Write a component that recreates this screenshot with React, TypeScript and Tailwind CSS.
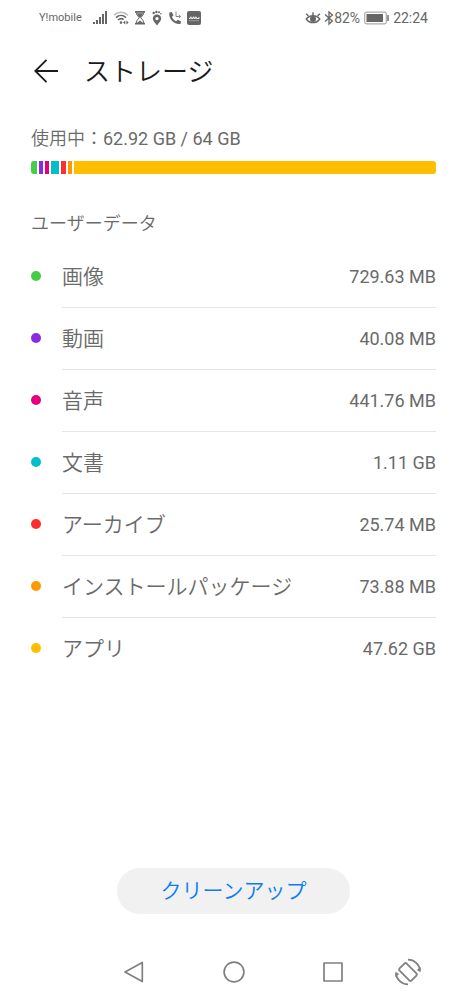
import React from "react";

const categories = [
  { name: "画像", size: "729.63 MB", color: "bg-[#47cc47]", bar: "w-[6px]" },
  { name: "動画", size: "40.08 MB", color: "bg-[#8a2be2]", bar: "w-[4px]" },
  { name: "音声", size: "441.76 MB", color: "bg-[#e3007f]", bar: "w-[4px]" },
  { name: "文書", size: "1.11 GB", color: "bg-[#00bfc9]", bar: "w-[8px]" },
  { name: "アーカイブ", size: "25.74 MB", color: "bg-[#ff2d2d]", bar: "w-[5px]" },
  { name: "インストールパッケージ", size: "73.88 MB", color: "bg-[#ff9800]", bar: "w-[4px]" },
  { name: "アプリ", size: "47.62 GB", color: "bg-[#ffbf00]", bar: "flex-1" },
];

function SignalIcon() {
  return (
    <svg width="16" height="16" viewBox="0 0 16 16" fill="#666">
      <path d="M1 12h2v2H1zM4 10h2v4H4zM7 7h2v7H7zM10 4h2v10h-2zM13 1h2v13h-2z" />
    </svg>
  );
}

function WifiIcon() {
  return (
    <svg width="16" height="16" viewBox="0 0 16 16" fill="none" stroke="#666" strokeWidth="1.6">
      <path d="M1 5.2C5 1.3 11 1.3 15 5.2" stroke="#bbb" />
      <path d="M3 7.6C6 4.8 10 4.8 13 7.6" />
      <path d="M5 10C7 8.2 9 8.2 10.6 9.6" />
      <circle cx="8" cy="12.6" r="1.3" fill="#666" stroke="none" />
      <path d="M12.3 10.4v4.2l-2.3-2.1zM13.4 10.4v4.2l2.3-2.1z" fill="#666" stroke="none" />
    </svg>
  );
}

function HourglassIcon() {
  return (
    <svg width="12" height="16" viewBox="0 0 12 16" fill="#666">
      <path d="M1 1h10v1.8H1zM1 12.7h10v1.8H1z" />
      <path d="M2.6 2.5v2L5.2 7.7 2.6 11v2M9.4 2.5v2L6.8 7.7 9.4 11v2" fill="none" stroke="#666" strokeWidth="1" />
      <path d="M2.6 3.2h6.8L6 8.2zM6 10.4 9 13H3z" />
    </svg>
  );
}

function PinIcon() {
  return (
    <svg width="12" height="16" viewBox="0 0 12 16" fill="#666">
      <path
        fillRule="evenodd"
        d="M6 4.4c2.5 0 4.2 1.8 4.2 4.1C10.2 11 7.6 13 6 15.4 4.4 13 1.8 11 1.8 8.5c0-2.3 1.7-4.1 4.2-4.1zm0 2.5a1.7 1.7 0 1 0 0 3.4 1.7 1.7 0 0 0 0-3.4z"
      />
      <circle cx="2.7" cy="3" r="1.2" />
      <circle cx="5.4" cy="2" r="1.2" />
      <circle cx="8" cy="2.2" r="1" />
      <circle cx="9.9" cy="3.7" r=".8" />
    </svg>
  );
}

function CallIcon() {
  return (
    <svg width="14" height="16" viewBox="0 0 14 16" fill="#666">
      <path d="M1.3 2.6 3.7 1.9 5.5 5.3 3.9 7.1c1 2 2.2 3.2 4.2 4.2L9.8 9.7l3.3 1.8-.6 2.5C6.3 15 .3 9 1.3 2.6z" />
      <path d="M8 1.5v5h4.5M10.9 4.9l1.7 1.6-1.7 1.5" fill="none" stroke="#888" strokeWidth="1" />
    </svg>
  );
}

function AppBadgeIcon() {
  return (
    <svg width="14" height="16" viewBox="0 0 14 16">
      <rect x="0" y="1" width="14" height="14" rx="2" fill="#666" />
      <path d="M2 8.5h1.3V7h1v1.5H6V7h1v1.5h1.3V7h1v1.5H12V7" fill="none" stroke="#eee" strokeWidth="1" />
      <path d="M2 10.7h10" stroke="#aaa" strokeWidth=".8" />
    </svg>
  );
}

function EyeIcon() {
  return (
    <svg width="16" height="16" viewBox="0 0 16 16" fill="none" stroke="#666" strokeWidth="1.4">
      <path d="M1.3 9C4.5 4.6 11.5 4.6 14.7 9 11.5 13.8 4.5 13.8 1.3 9z" />
      <circle cx="8" cy="9" r="2.3" fill="#666" />
      <path d="M8 5.5V2.2M3.4 6 1.2 3.8M12.6 6l2.2-2.2" />
    </svg>
  );
}

function BluetoothIcon() {
  return (
    <svg width="10" height="16" viewBox="0 0 10 16" fill="none" stroke="#666" strokeWidth="1.3">
      <path d="M1 4.6 8.4 11 5 14V2l3.4 3L1 11.4" />
    </svg>
  );
}

function BatteryIcon() {
  return (
    <svg width="25" height="14" viewBox="0 0 25 14">
      <rect x=".7" y="1.2" width="21.6" height="11.6" rx="1.8" fill="none" stroke="#aaa" strokeWidth="1.2" />
      <rect x="2.5" y="3" width="16.5" height="8" fill="#666" />
      <path d="M23.3 4h1.4v6h-1.4z" fill="#666" />
    </svg>
  );
}

function StatusBar() {
  return (
    <div className="flex h-9 items-center justify-between px-[39px] text-[#666]">
      <div className="flex items-center">
        <span className="mr-[10px] text-[11px]">Y!mobile</span>
        <div className="flex items-center gap-[5px]">
          <SignalIcon />
          <WifiIcon />
          <HourglassIcon />
          <PinIcon />
          <CallIcon />
          <AppBadgeIcon />
        </div>
      </div>
      <div className="flex items-center text-[14px]">
        <EyeIcon />
        <span className="ml-[3px]"><BluetoothIcon /></span>
        <span>82%</span>
        <span className="mx-1"><BatteryIcon /></span>
        <span>22:24</span>
      </div>
    </div>
  );
}

function NavigationBar() {
  return (
    <nav className="flex h-[54px] items-center justify-end pr-11">
      <button type="button" aria-label="戻る" className="mr-[76px]">
        <svg width="24" height="24" viewBox="0 0 24 24" fill="none" stroke="#808080" strokeWidth="1.7" strokeLinejoin="round">
          <path d="M20.3 2.5v19L3 12z" />
        </svg>
      </button>
      <button type="button" aria-label="ホーム" className="mr-[75px]">
        <svg width="24" height="24" viewBox="0 0 24 24" fill="none" stroke="#808080" strokeWidth="1.7">
          <circle cx="12" cy="12" r="9.9" />
        </svg>
      </button>
      <button type="button" aria-label="最近使ったアプリ" className="mr-12">
        <svg width="24" height="24" viewBox="0 0 24 24" fill="none" stroke="#808080" strokeWidth="1.7" strokeLinejoin="round">
          <path d="M3 3h18v18H3z" />
        </svg>
      </button>
      <button type="button" aria-label="画面を回転">
        <svg width="30" height="30" viewBox="0 0 30 30" fill="none" stroke="#808080" strokeWidth="1.8">
          <rect x="10" y="6.5" width="10" height="17" rx="1.6" transform="rotate(-45 15 15)" />
          <path d="M15 2.7C21.5 2.7 26.5 7.5 27 13.5M15 27.3C8.5 27.3 3.5 22.5 3 16.5" />
          <path d="M27.6 10v5.2L23.8 13zM2.4 20v-5.2L6.2 17z" fill="#808080" stroke="none" />
        </svg>
      </button>
    </nav>
  );
}

export default function App() {
  return (
    <div className="flex min-h-screen flex-col bg-white font-[Roboto,'Noto_Sans_CJK_JP',sans-serif] text-[#6a6a6a]">
      <StatusBar />
      <header className="flex h-[70px] items-center pl-[34px]">
        <button type="button" aria-label="戻る">
          <svg width="24" height="24" viewBox="0 0 24 24" fill="none" stroke="#1a1a1a" strokeWidth="1.8">
            <path d="M24 12H1.5M12.5 .8 1.3 12l11.2 11.2" />
          </svg>
        </button>
        <h1 className="ml-[26px] pt-[2px] text-[26px] font-[350] text-[#1a1a1a]">ストレージ</h1>
      </header>
      <main className="flex flex-1 flex-col px-[31px]">
        <p className="mt-[19px] text-[18px] leading-7">
          <span className="font-[350]">使用中：</span>62.92 GB / 64 GB
        </p>
        <div className="mt-2 flex h-[13px] gap-[2px] overflow-hidden rounded-[3px]">
          {categories.map((c) => (
            <div key={c.name} className={`${c.bar} ${c.color}`} />
          ))}
        </div>
        <h2 className="mt-9 text-[18px] leading-7 font-[350]">ユーザーデータ</h2>
        <ul className="mt-2">
          {categories.map((c) => (
            <li key={c.name} className="group flex h-[62px] items-center">
              <span className={`mr-[21px] mb-[2px] size-[10px] rounded-full ${c.color}`} />
              <div className="flex h-full flex-1 items-center justify-between border-b border-[#e5e5e5] group-last:border-transparent">
                <span className="pt-[2px] text-[21px] font-[350]">{c.name}</span>
                <span className="text-[18px]">{c.size}</span>
              </div>
            </li>
          ))}
        </ul>
        <button
          type="button"
          className="mx-auto mt-auto mb-[31px] h-[46px] w-[233px] rounded-full bg-[#f1f1f1] pt-[2px] text-[21px] font-[350] text-[#0a7df5]"
        >
          クリーンアップ
        </button>
      </main>
      <NavigationBar />
    </div>
  );
}
